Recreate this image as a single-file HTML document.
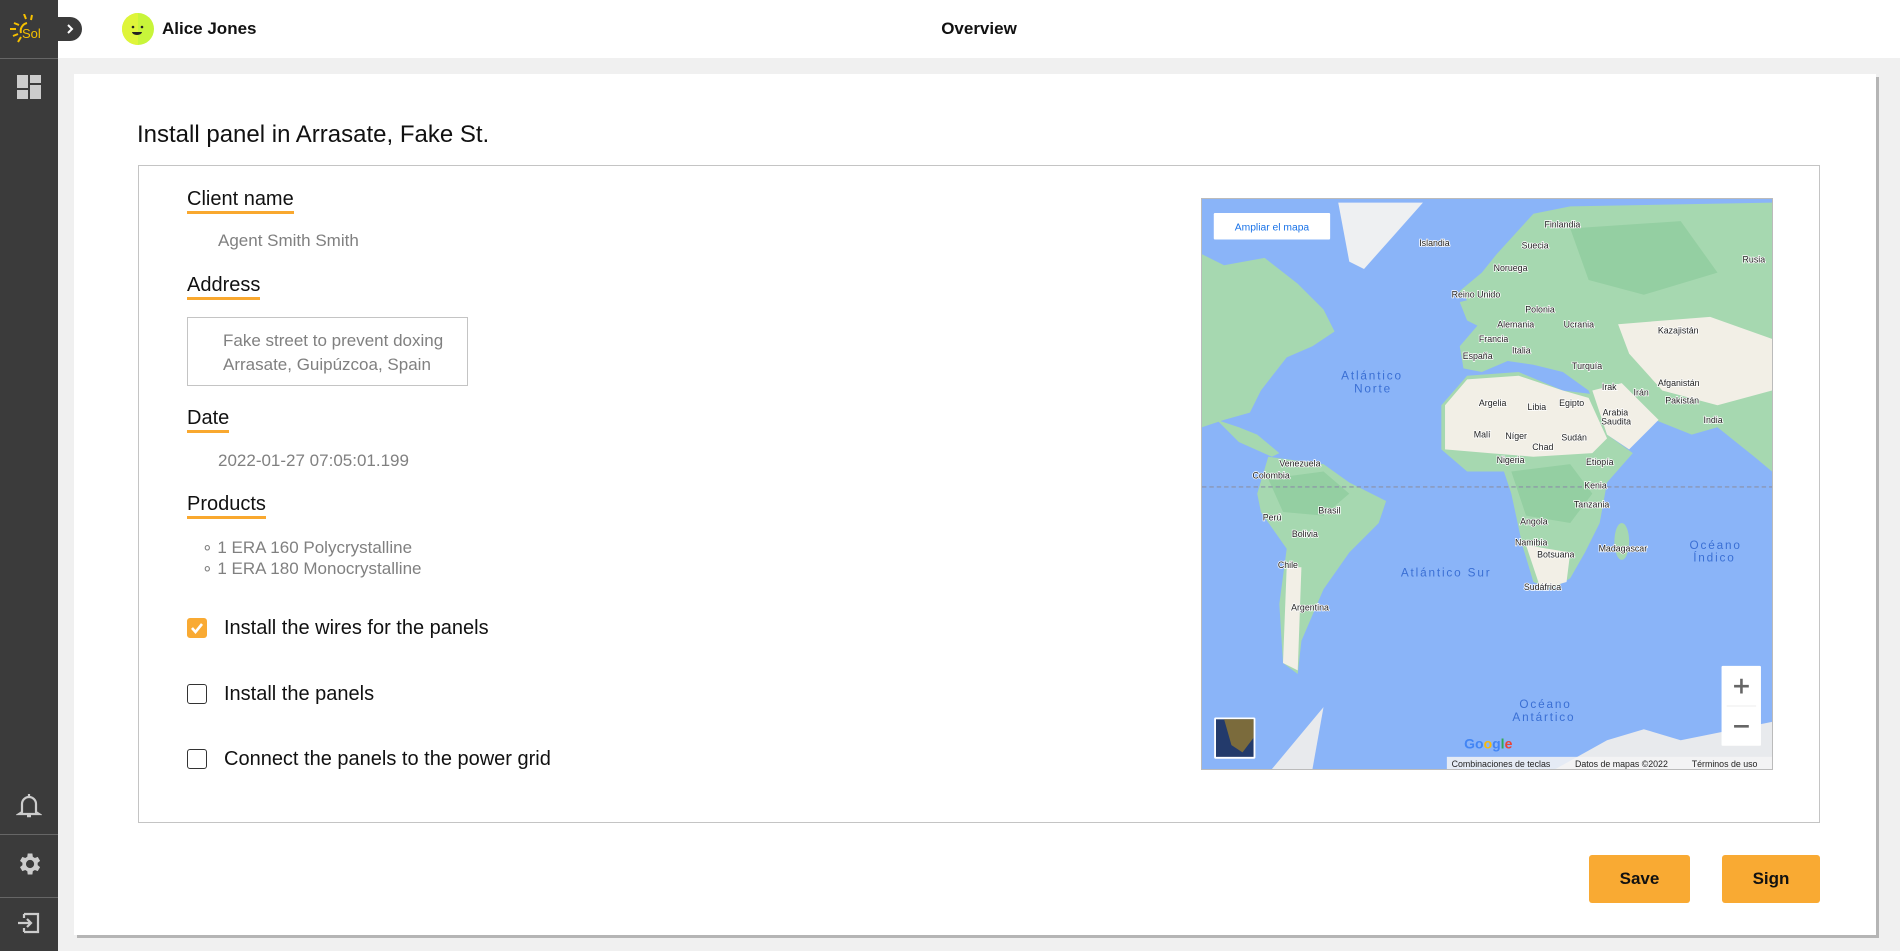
<!DOCTYPE html>
<html><head><meta charset="utf-8"><style>
*{margin:0;padding:0;box-sizing:border-box}
body{width:1900px;height:951px;background:#f0f0f0;font-family:"Liberation Sans",sans-serif;position:relative;overflow:hidden;color:#111}
.a{position:absolute}
.side{left:0;top:0;width:58px;height:951px;background:#3b3b3b}
.hdr{left:58px;top:0;width:1842px;height:58px;background:#fff}
.card{left:74px;top:74px;width:1802px;height:861px;background:#fff;box-shadow:3px 3px 0 #b5b5b5}
.lbl{font-size:20px;color:#111;border-bottom:3px solid #f9a82f;line-height:22px;padding-bottom:1px}
.val{font-size:17px;color:#808080}
.cb{width:20px;height:20px;border:1.5px solid #333;border-radius:3px}
.ct{font-size:20px;color:#111}
.btn{background:#f9aa33;border-radius:3px;font-weight:bold;font-size:17px;text-align:center;line-height:48px;height:48px}
.ml{font-family:"Liberation Sans",sans-serif;font-size:24px;fill:#222;stroke:#fff;stroke-width:4;paint-order:stroke}
.oc{font-size:32px;fill:#3a6fd4;letter-spacing:5px}
</style></head><body>
<div class="a hdr"></div>
<div class="a side"></div>
<!-- logo -->
<svg class="a" style="left:10px;top:14px" width="40" height="30" viewBox="0 0 40 30">
<g stroke="#f5c000" stroke-width="2" fill="none"><path d="M17 9a8 8 0 0 0-6 10"/><path d="M14 0l2 5M22 1l-1 5M4 9l5 2M0 15h6M3 22l5-2M8 28l3-5"/></g>
<text x="12" y="24" font-size="13" fill="#f5c000" font-family="Liberation Sans">Sol</text></svg>
<div class="a" style="left:0;top:58px;width:58px;height:1px;background:#666"></div>
<div class="a" style="left:58px;top:17px;width:24px;height:24px;background:#3b3b3b;border-radius:0 12px 12px 0"></div>
<svg class="a" style="left:63px;top:22px" width="14" height="14"><path d="M5 3l4 4-4 4" stroke="#fff" stroke-width="2" fill="none"/></svg>
<!-- dashboard icon -->
<svg class="a" style="left:17px;top:75px" width="24" height="24"><g fill="#ccc"><rect x="0" y="0" width="11" height="13"/><rect x="13" y="0" width="11" height="8"/><rect x="0" y="15" width="11" height="9"/><rect x="13" y="10" width="11" height="14"/></g></svg>
<!-- bell -->
<svg class="a" style="left:16px;top:792px" width="26" height="28" viewBox="0 0 26 28"><path d="M13 2v2M6 20V12a7 7 0 0 1 14 0v8l3 2H3z" stroke="#ccc" stroke-width="2.2" fill="none"/><path d="M11 24h4" stroke="#ccc" stroke-width="2.5"/></svg>
<div class="a" style="left:0;top:834px;width:58px;height:1px;background:#666"></div>
<!-- gear -->
<svg class="a" style="left:15px;top:850px" width="28" height="28" viewBox="0 0 24 24"><path fill="#ccc" d="M19.4 13c.04-.33.06-.66.06-1s-.02-.67-.06-1l2.1-1.65-2-3.46-2.5 1a7.3 7.3 0 0 0-1.7-1L14.9 3h-4l-.4 2.9c-.6.25-1.2.6-1.7 1l-2.5-1-2 3.460L6.4 11c-.04.33-.06.66-.06 1s.02.67.06 1l-2.1 1.65 2 3.46 2.5-1c.5.4 1.1.75 1.7 1l.4 2.9h4l.4-2.9c.6-.25 1.2-.6 1.7-1l2.5 1 2-3.46zM12.9 15.5a3.5 3.5 0 1 1 0-7 3.5 3.5 0 0 1 0 7z"/></svg>
<div class="a" style="left:0;top:897px;width:58px;height:1px;background:#666"></div>
<!-- exit -->
<svg class="a" style="left:16px;top:910px" width="26" height="26" viewBox="0 0 26 26"><path d="M8 4h14v18H8M2 13h13M11 9l4 4-4 4M8 4v4M8 18v4" stroke="#ccc" stroke-width="2.2" fill="none"/></svg>

<svg class="a" style="left:122px;top:13px" width="32" height="32"><circle cx="16" cy="16" r="16" fill="#c8f53a"/><path d="M16 0a16 16 0 0 0 0 32z" fill="#dff53a"/><circle cx="11" cy="14" r="1.3" fill="#222"/><circle cx="20" cy="14" r="1.3" fill="#222"/><path d="M10 19h10a5 3 0 0 1-10 0z" fill="#222"/></svg>
<div class="a" style="left:162px;top:19px;font-size:17px;font-weight:bold">Alice Jones</div>
<div class="a" style="left:879px;top:19px;width:200px;text-align:center;font-size:17px;font-weight:bold">Overview</div>

<div class="a card"></div>
<div class="a" style="left:137px;top:121px;font-size:24px">Install panel in Arrasate, Fake St.</div>
<div class="a" style="left:138px;top:165px;width:1682px;height:658px;border:1px solid #c4c4c4"></div>

<div class="a lbl" style="left:187px;top:188px">Client name</div>
<div class="a val" style="left:218px;top:231px">Agent Smith Smith</div>
<div class="a lbl" style="left:187px;top:274px">Address</div>
<div class="a" style="left:187px;top:317px;width:281px;height:69px;border:1px solid #c4c4c4"></div>
<div class="a val" style="left:223px;top:329px;line-height:24px">Fake street to prevent doxing<br>Arrasate, Guipúzcoa, Spain</div>
<div class="a lbl" style="left:187px;top:407px">Date</div>
<div class="a val" style="left:218px;top:451px">2022-01-27 07:05:01.199</div>
<div class="a lbl" style="left:187px;top:493px">Products</div>
<div class="a val" style="left:202px;top:537px;line-height:21px">∘ 1 ERA 160 Polycrystalline<br>∘ 1 ERA 180 Monocrystalline</div>

<div class="a cb" style="left:187px;top:618px;background:#f9aa33;border-color:#f9aa33"></div>
<svg class="a" style="left:189px;top:620px" width="16" height="16"><path d="M3 8l3.5 4L13 4" stroke="#fff" stroke-width="2.6" fill="none"/></svg>
<div class="a ct" style="left:224px;top:617px">Install the wires for the panels</div>
<div class="a cb" style="left:187px;top:684px"></div>
<div class="a ct" style="left:224px;top:683px">Install the panels</div>
<div class="a cb" style="left:187px;top:749px"></div>
<div class="a ct" style="left:224px;top:748px">Connect the panels to the power grid</div>

<!-- map -->
<svg class="a" style="left:1201px;top:198px;border:1px solid #bbb" width="572" height="572" viewBox="0 0 1548 1548">
<rect width="1548" height="1548" fill="#8ab4f8"/>
<g fill="#a6d8b0">
<path d="M0 150L60 180L170 160L260 230L330 300L360 360L300 400L230 430L160 520L130 580L60 600L0 620Z"/>
<path d="M370 10L600 10L520 100L440 190L400 170Z" fill="#eef0f2"/>
<path d="M40 600L100 660L190 700L210 690L150 640L100 620Z"/>
<path d="M180 700L330 720L400 770L500 820L480 880L400 960L330 1060L270 1200L260 1290L220 1260L210 1100L230 950L160 850L150 800Z"/>
<path d="M700 250L760 200L800 150L900 40L1000 20L1548 10L1548 740L1500 700L1400 620L1330 640L1230 600L1160 680L1100 640L1050 520L980 470L900 450L830 440L760 470L710 460L700 400L760 330L740 300Z"/>
<path d="M650 560L720 480L860 470L980 520L1060 530L1100 640L1170 690L1100 770L1080 880L1040 960L1000 1030L950 1060L900 1040L870 940L840 800L820 740L720 740L650 680Z"/>
<ellipse cx="1140" cy="930" rx="20" ry="50"/>
<path d="M700 280L740 270L790 320L760 350L720 330Z"/>
</g>
<g fill="#94cfa2"><path d="M840 740L1000 720L1060 800L1000 880L880 860Z"/><path d="M180 760L330 740L400 800L330 860L220 850Z"/><path d="M1000 80L1300 60L1400 200L1200 260L1050 220Z"/></g>
<g fill="#f2efe6">
<path d="M660 560L720 490L860 480L980 520L1050 540L1100 650L1060 690L900 700L780 690L660 680Z"/>
<path d="M1060 520L1140 500L1240 600L1160 680L1100 640Z"/>
<path d="M1130 340L1380 320L1548 380L1548 520L1400 560L1250 520L1160 420Z"/>
<path d="M230 1000L270 1000L260 1280L220 1260Z"/>
<path d="M880 940L1000 960L990 1040L920 1060Z"/>
</g>
<g fill="#e8eaed"><path d="M190 1548L330 1380L300 1548Z"/><path d="M960 1548L1100 1470L1200 1440L1300 1470L1548 1420L1548 1548Z"/></g>
<line x1="0" y1="782" x2="1548" y2="782" stroke="#8a8fa6" stroke-width="3" stroke-dasharray="12 8"/>
<g class="ml">
<text x="590" y="127">Islandia</text><text x="930" y="78">Finlandia</text><text x="868" y="135">Suecia</text><text x="792" y="195">Noruega</text><text x="1468" y="173">Rusia</text><text x="678" y="267">Reino Unido</text><text x="878" y="308">Polonia</text><text x="802" y="349">Alemania</text><text x="982" y="349">Ucrania</text><text x="1238" y="365">Kazajistán</text><text x="752" y="389">Francia</text><text x="842" y="419">Italia</text><text x="708" y="435">España</text><text x="1005" y="462">Turquía</text><text x="1086" y="519">Irak</text><text x="1172" y="533">Irán</text><text x="1238" y="508">Afganistán</text><text x="1258" y="556">Pakistán</text><text x="752" y="562">Argelia</text><text x="884" y="573">Libia</text><text x="970" y="562">Egipto</text><text x="1088" y="588">Arabia</text><text x="1084" y="613">Saudita</text><text x="1362" y="608">India</text><text x="738" y="648">Malí</text><text x="824" y="652">Níger</text><text x="976" y="656">Sudán</text><text x="897" y="681">Chad</text><text x="800" y="717">Nigeria</text><text x="1043" y="722">Etiopía</text><text x="210" y="726">Venezuela</text><text x="137" y="759">Colombia</text><text x="1038" y="786">Kenia</text><text x="1010" y="838">Tanzania</text><text x="316" y="854">Brasil</text><text x="165" y="873">Perú</text><text x="864" y="884">Angola</text><text x="244" y="918">Bolivia</text><text x="850" y="941">Namibia</text><text x="1077" y="957">Madagascar</text><text x="910" y="973">Botsuana</text><text x="206" y="1002">Chile</text><text x="874" y="1062">Sudáfrica</text><text x="242" y="1117">Argentina</text>
</g>
<g class="oc" font-family="Liberation Sans"><text x="378" y="490">Atlántico</text><text x="413" y="525">Norte</text><text x="540" y="1025">Atlántico Sur</text><text x="1324" y="950">Océano</text><text x="1334" y="985">Índico</text><text x="862" y="1382">Océano</text><text x="843" y="1417">Antártico</text></g>
<rect x="32" y="38" width="316" height="72" rx="3" fill="#fff"/>
<text x="190" y="85" text-anchor="middle" font-size="28" fill="#1a73e8" font-family="Liberation Sans">Ampliar el mapa</text>
<rect x="1411" y="1268" width="107" height="217" rx="3" fill="#fff"/>
<path d="M1445 1323h40M1465 1303v40M1445 1432h40" stroke="#666" stroke-width="7"/>
<line x1="1425" y1="1377" x2="1505" y2="1377" stroke="#e6e6e6" stroke-width="2"/>
<rect x="33" y="1408" width="112" height="112" rx="4" fill="#fff"/>
<rect x="38" y="1413" width="102" height="102" fill="#233a6b"/><path d="M60 1413h80v50l-30 40-30-20z" fill="#7b6b3c"/>
<text x="712" y="1492" font-size="38" font-weight="bold" fill="#4285f4" font-family="Liberation Sans">Go<tspan fill="#fbbc05">o</tspan><tspan fill="#4285f4">g</tspan><tspan fill="#34a853">l</tspan><tspan fill="#ea4335">e</tspan></text>
<rect x="665" y="1515" width="883" height="33" fill="#f5f5f5" opacity=".85"/>
<text x="678" y="1542" font-size="24" fill="#222" font-family="Liberation Sans">Combinaciones de teclas</text>
<text x="1013" y="1542" font-size="24" fill="#222" font-family="Liberation Sans">Datos de mapas ©2022</text>
<text x="1330" y="1542" font-size="24" fill="#222" font-family="Liberation Sans">Términos de uso</text>
</svg>

<div class="a btn" style="left:1589px;top:855px;width:101px">Save</div>
<div class="a btn" style="left:1722px;top:855px;width:98px">Sign</div>
</body></html>
